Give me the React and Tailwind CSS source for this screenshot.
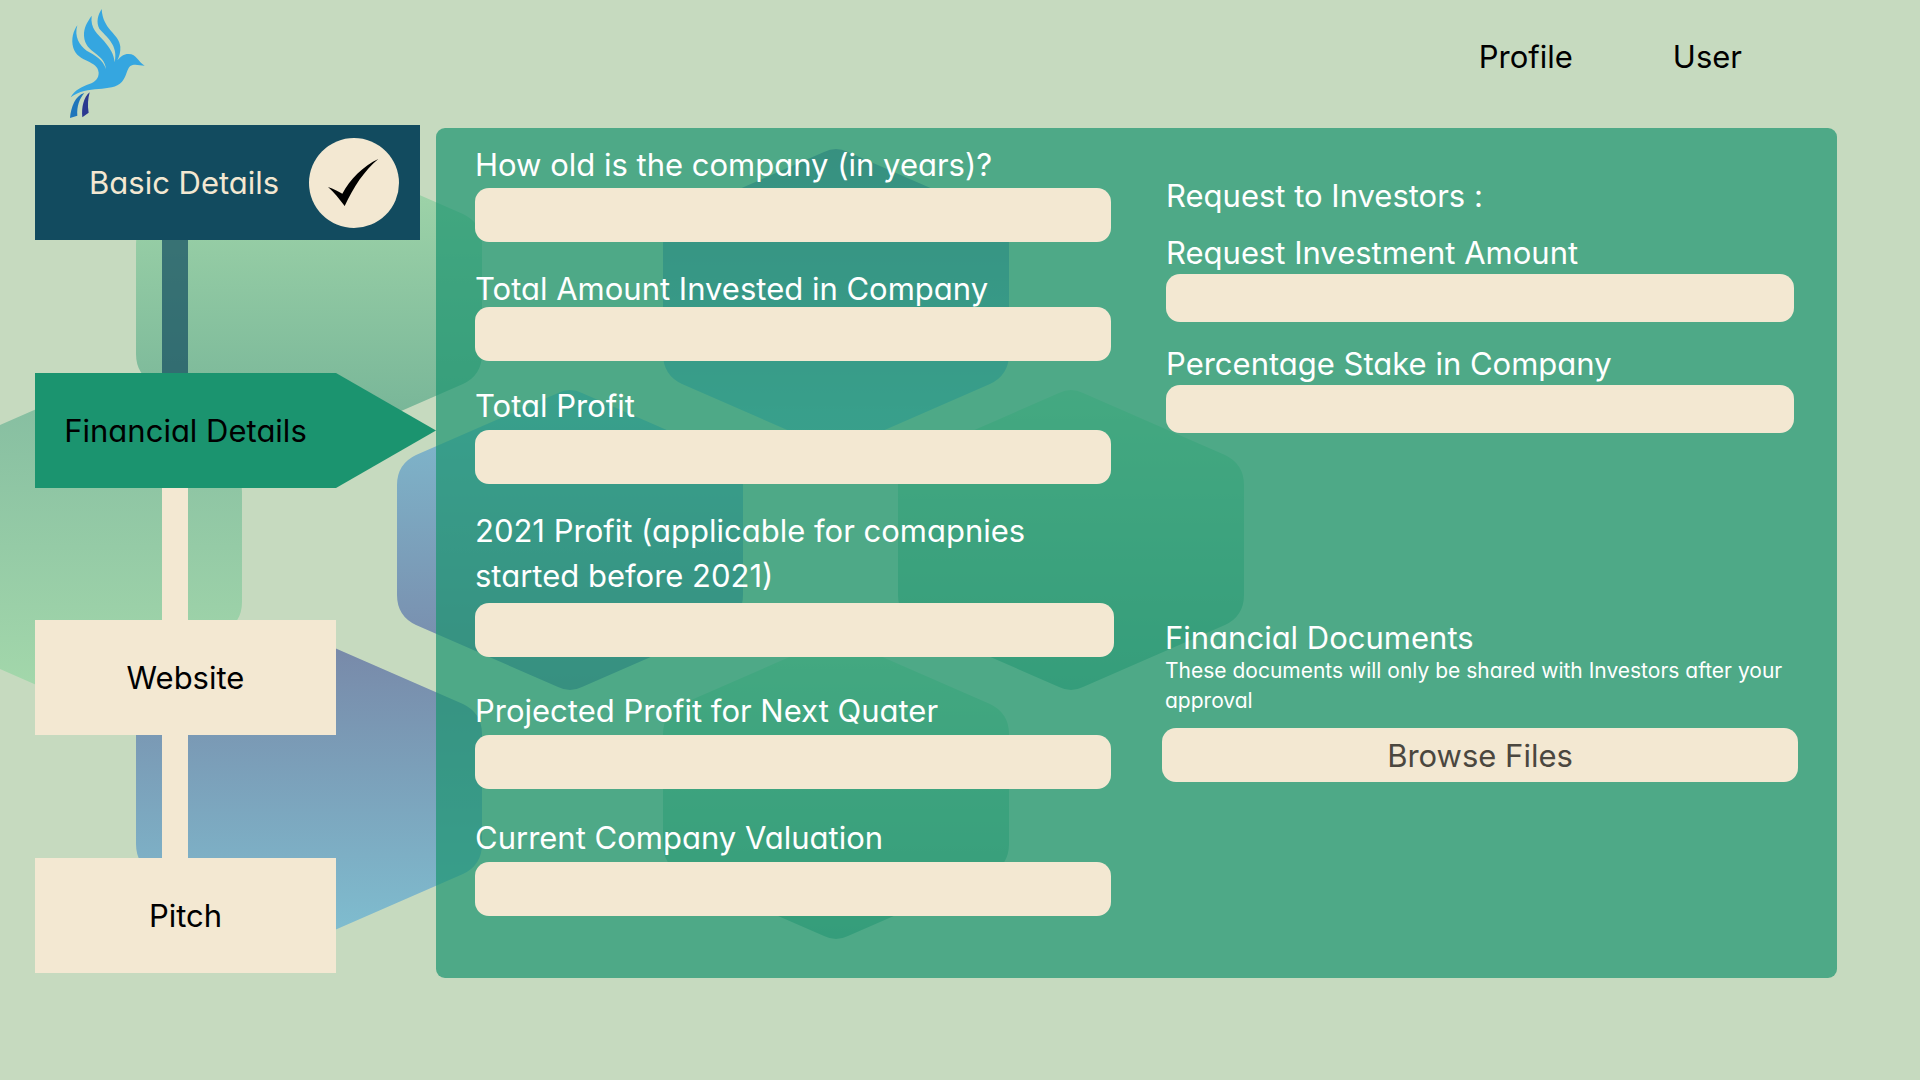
const HEX =
  'M-12 -147 Q0 -153 12 -147 L154 -85 Q173 -76 173 -55 L173 55 Q173 76 154 85 L12 147 Q0 153 -12 147 L-154 85 Q-173 76 -173 55 L-173 -55 Q-173 -76 -154 -85 Z';

const HEXAGONS = [
  { x: 309, y: 299, fill: 'url(#greenDown)' },
  { x: 836, y: 299, fill: 'url(#blueUp)' },
  { x: 69, y: 547, fill: 'url(#greenUp)' },
  { x: 570, y: 540, fill: 'url(#blueDown)' },
  { x: 1071, y: 540, fill: 'url(#greenDown)' },
  { x: 309, y: 789, fill: 'url(#blueUp)' },
  { x: 836, y: 789, fill: 'url(#greenDown)' },
];

function Gradient({ id, from, to }) {
  return (
    <linearGradient id={id} x1="0" y1="0" x2="0" y2="1">
      <stop offset="0" stopColor={from} />
      <stop offset="1" stopColor={to} />
    </linearGradient>
  );
}

function Backdrop() {
  return (
    <svg
      aria-hidden="true"
      className="pointer-events-none absolute top-0 left-0 -z-10"
      width="1920"
      height="1080"
      viewBox="0 0 1920 1080"
    >
      <defs>
        <Gradient id="greenDown" from="#a4d8ab" to="#73b296" />
        <Gradient id="greenUp" from="#86bea1" to="#a4d8ab" />
        <Gradient id="blueDown" from="#7fbdd0" to="#7886a8" />
        <Gradient id="blueUp" from="#7888a8" to="#7fbed0" />
      </defs>
      {HEXAGONS.map(({ x, y, fill }) => (
        <path key={`${x}-${y}`} d={HEX} fill={fill} transform={`translate(${x} ${y})`} />
      ))}
    </svg>
  );
}

function BirdLogo() {
  return (
    <svg className="h-[125px] w-[120px]" viewBox="0 0 360 375" role="img" aria-label="Home">
      <path
        fill="#35a6e0"
        d="M82 76 C72 110 88 136 110 152 C136 166 160 180 168 207 C164 158 106 162 102 108 C101 82 112 66 125 47 C120 86 144 102 162 123 C180 145 192 162 194 187 C206 134 168 110 148 86 C138 66 143 46 155 27 C158 90 207 100 211 140 C212 156 208 168 202 181 C212 170 220 162 236 162 C260 162 264 186 284 197 C268 196 252 190 241 198 C230 207 231 228 216 245 C184 280 112 252 62 292 C74 270 96 260 118 252 C136 245 146 236 146 218 C144 180 84 188 70 144 C62 116 71 92 82 76 Z"
      />
      <path fill="#1e76bb" d="M103 279 C76 286 63 322 60 354 L82 347 C80 320 88 296 103 279 Z" />
      <path fill="#2b3990" d="M119 277 C101 292 94 322 97 352 L116 338 C112 316 114 296 119 277 Z" />
    </svg>
  );
}

function CheckBadge() {
  return (
    <svg className="size-[90px]" viewBox="0 0 270 270" role="img" aria-label="Completed">
      <circle cx="135" cy="135" r="135" fill="#f3e8d2" />
      <path d="M57 147 C74 153 88 160 100 167 C122 126 164 82 208 63 C166 98 134 146 107 204 C90 182 76 164 57 147 Z" />
    </svg>
  );
}

function Connector({ className }) {
  return <div className={`ml-[127px] w-[26px] ${className}`} />;
}

function Steps() {
  return (
    <nav aria-label="Steps" className="flex w-[401px] shrink-0 flex-col">
      <a href="#basic" className="flex h-[115px] w-[385px] items-center justify-between bg-[#124b5f] pr-[21px] pl-[54px] text-[#f3e8d2]">
        Basic Details
        <CheckBadge />
      </a>
      <Connector className="h-[133px] bg-[#114b5f]/70" />
      <a
        href="#financial"
        aria-current="step"
        className="flex h-[115px] items-center bg-[#1b946f] [clip-path:polygon(0_0,301px_0,100%_50%,301px_100%,0_100%)]"
      >
        <span className="w-[301px] text-center">Financial Details</span>
      </a>
      <Connector className="h-[132px] bg-[#f3e8d2]" />
      <a href="#website" className="flex h-[115px] w-[301px] items-center justify-center bg-[#f3e8d2]">
        Website
      </a>
      <Connector className="h-[123px] bg-[#f3e8d2]" />
      <a href="#pitch" className="flex h-[115px] w-[301px] items-center justify-center bg-[#f3e8d2]">
        Pitch
      </a>
    </nav>
  );
}

function Field({ id, label, className = '', labelClass = '', inputClass = 'h-[54px]' }) {
  return (
    <div className={className}>
      <label htmlFor={id} className={`block ${labelClass}`}>
        {label}
      </label>
      <input
        id={id}
        type="text"
        className={`relative block w-full rounded-[14px] bg-[#f3e8d2] px-4 text-black outline-none ${inputClass}`}
      />
    </div>
  );
}

export default function App() {
  return (
    <div className="relative isolate min-h-screen overflow-hidden bg-[#c6dabf] pl-[35px] font-['Inter',sans-serif] text-[31px] leading-[45px] text-black [font-feature-settings:'cv11']">
      <Backdrop />

      <header className="flex h-[125px] items-start justify-between pr-[178px] pl-[15px]">
        <a href="#home">
          <BirdLogo />
        </a>
        <nav aria-label="Account" className="flex gap-[100px] pt-[34px]">
          <a href="#profile">Profile</a>
          <a href="#user">User</a>
        </nav>
      </header>

      <div className="flex items-start">
        <Steps />

        <form className="mt-[3px] mr-[83px] grid flex-1 grid-cols-2 gap-x-[51px] rounded-[9px] bg-[#1b946f]/70 px-[39px] pt-[14px] pb-[62px] text-white">
          <div>
            <Field id="age" label="How old is the company (in years)?" labelClass="mb-px" />
            <Field id="invested" label="Total Amount Invested in Company" className="mt-6" labelClass="-mb-1" />
            <Field id="profit" label="Total Profit" className="mt-[22px]" labelClass="mb-0.5" />
            <Field
              id="profit2021"
              label="2021 Profit (applicable for comapnies started before 2021)"
              className="mt-6 -mr-[3px]"
              labelClass="mb-[5px] pr-10"
            />
            <Field id="projected" label="Projected Profit for Next Quater" className="mt-[31px]" labelClass="mb-0.5" />
            <Field id="valuation" label="Current Company Valuation" className="mt-[26px]" labelClass="mb-0.5" />
          </div>

          <div className="pt-[31px]">
            <fieldset className="mx-1">
              <legend>Request to Investors :</legend>
              <Field id="amount" label="Request Investment Amount" className="mt-3" labelClass="-mb-px" inputClass="h-12" />
              <Field id="stake" label="Percentage Stake in Company" className="mt-[19px]" labelClass="-mb-px" inputClass="h-12" />
            </fieldset>

            <section className="mt-[182px]">
              <h2 className="ml-[3px]">Financial Documents</h2>
              <p className="-mt-1 ml-[3px] text-[21px] leading-[30px]">
                These documents will only be shared with Investors after your approval
              </p>
              <button type="button" className="mt-3 block h-[54px] w-full rounded-[14px] bg-[#f3e8d2] text-[#4b473f]">
                Browse Files
              </button>
            </section>
          </div>
        </form>
      </div>
    </div>
  );
}
